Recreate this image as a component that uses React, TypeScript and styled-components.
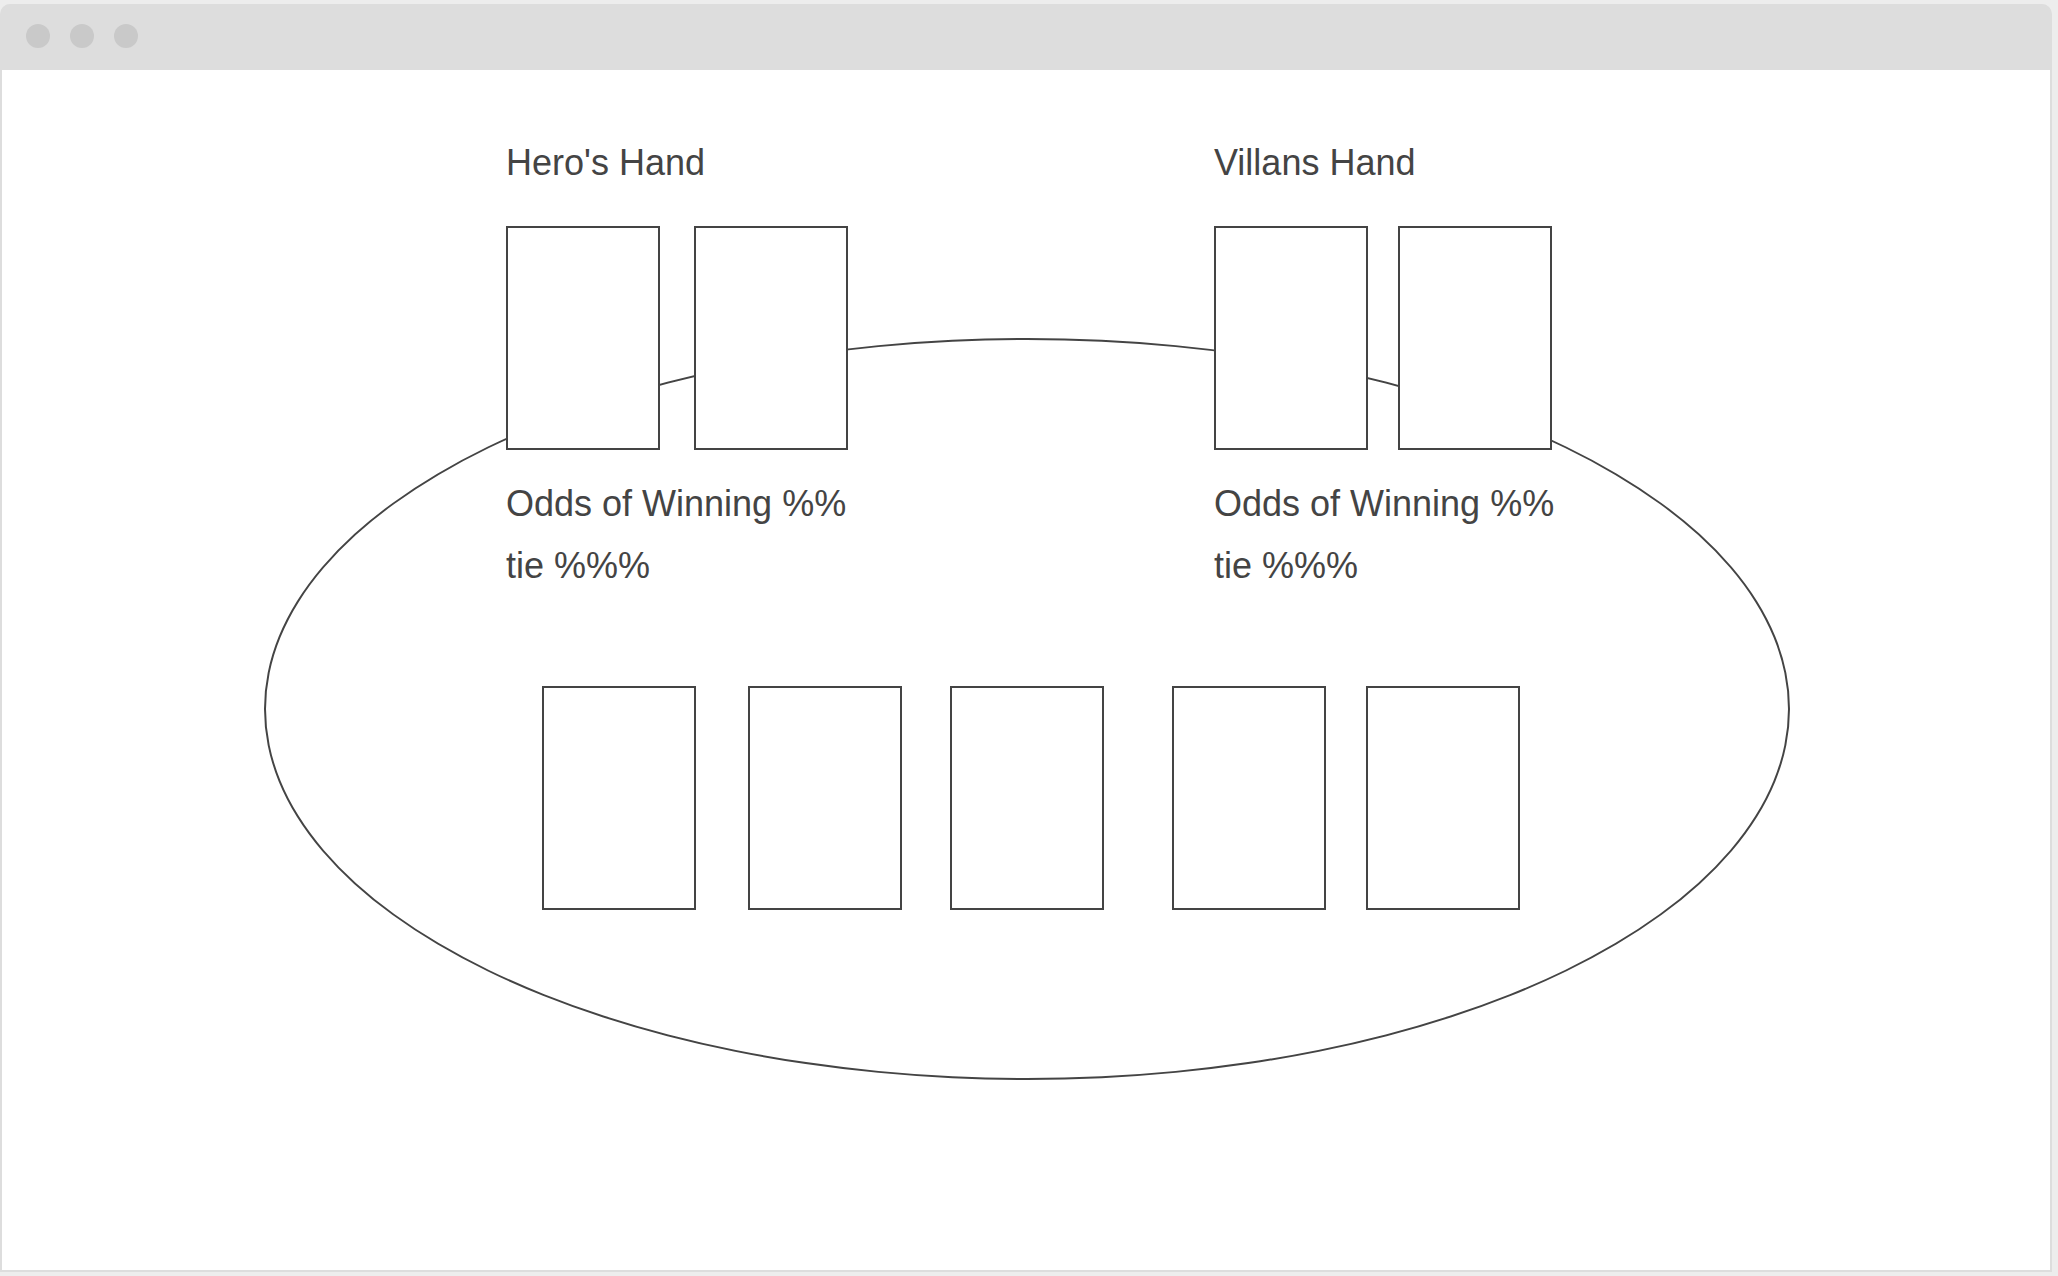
import React from "react";
import styled, { createGlobalStyle } from "styled-components";

const ink = "#444444";
const chrome = "#dddddd";

const GlobalStyle = createGlobalStyle`
  *, *::before, *::after {
    box-sizing: border-box;
  }
  body {
    margin: 0;
    background: #ededed;
    color: ${ink};
    font-family: "Liberation Sans", Arial, sans-serif;
  }
`;

const Page = styled.div`
  display: flex;
  min-height: 100vh;
  padding: 4px 6px 4px 0;
`;

const BrowserWindow = styled.div`
  flex: 1;
  display: flex;
  flex-direction: column;
  border: 2px solid ${chrome};
  border-top: 0;
  border-radius: 10px 10px 0 0;
  background: ${chrome};
`;

const TitleBar = styled.header`
  display: flex;
  align-items: center;
  gap: 20px;
  height: 66px;
  padding: 0 24px 2px;
`;

const Dot = styled.span`
  width: 24px;
  height: 24px;
  border-radius: 50%;
  background: #c9c9c9;
`;

const Game = styled.main`
  flex: 1;
  display: grid;
  align-items: start;
  background: #ffffff;
`;

const Table = styled.div`
  grid-area: 1 / 1;
  height: 742px;
  margin: 268px 260px 0 262px;
  border: 2px solid ${ink};
  border-radius: 50%;
`;

const Board = styled.div`
  grid-area: 1 / 1;
  z-index: 1;
  justify-self: center;
  display: flex;
  flex-direction: column;
  gap: 89px;
  padding: 62px 0 89px 6px;
`;

const Hands = styled.div`
  display: grid;
  grid-template-columns: 342px 338px;
  column-gap: 366px;
`;

const Hand = styled.section`
  display: flex;
  flex-direction: column;
  white-space: nowrap;
`;

const HandTitle = styled.h2`
  margin: 0 0 32px;
  font-size: 36px;
  font-weight: 400;
  line-height: 62px;
`;

const HandCards = styled.div`
  display: flex;
  justify-content: space-between;
  margin-bottom: 23px;
`;

const Odds = styled.p`
  margin: 0;
  font-size: 36px;
  line-height: 62px;
`;

const Community = styled.section`
  display: flex;
  padding-left: 36px;
`;

const Card = styled.div<{ $space?: number }>`
  width: 154px;
  height: 224px;
  margin-left: ${({ $space = 0 }) => $space}px;
  border: 2px solid ${ink};
  background: #ffffff;
`;

const players = ["Hero's Hand", "Villans Hand"];
const communitySpacing = [0, 52, 48, 68, 40];

export default function App() {
  return (
    <>
      <GlobalStyle />
      <Page>
        <BrowserWindow>
          <TitleBar>
            <Dot />
            <Dot />
            <Dot />
          </TitleBar>
          <Game>
            <Table />
            <Board>
              <Hands>
                {players.map((name) => (
                  <Hand key={name}>
                    <HandTitle>{name}</HandTitle>
                    <HandCards>
                      <Card />
                      <Card />
                    </HandCards>
                    <Odds>Odds of Winning %%</Odds>
                    <Odds>tie %%%</Odds>
                  </Hand>
                ))}
              </Hands>
              <Community>
                {communitySpacing.map((space, index) => (
                  <Card key={index} $space={space} />
                ))}
              </Community>
            </Board>
          </Game>
        </BrowserWindow>
      </Page>
    </>
  );
}
